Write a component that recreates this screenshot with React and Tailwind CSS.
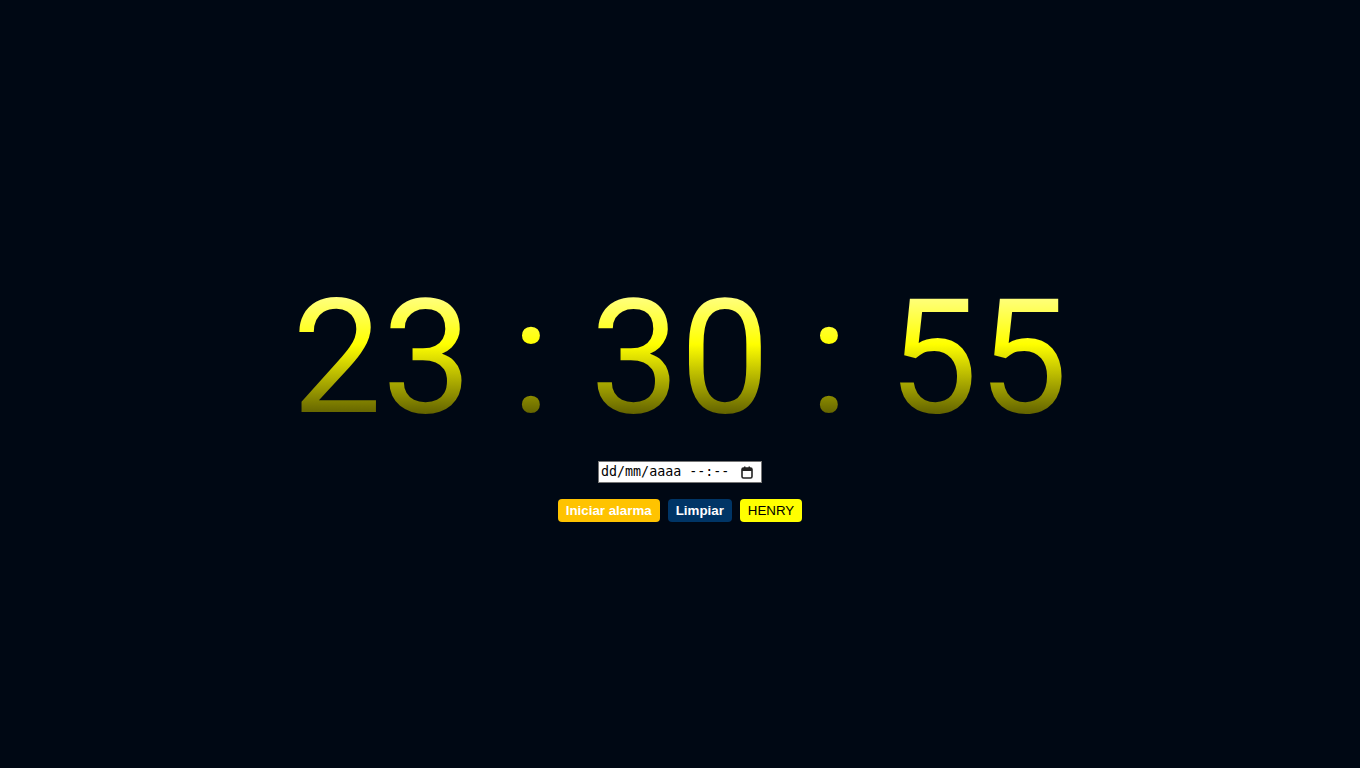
export default function App() {
  return (
    <div className="min-h-screen w-full bg-[#000814] flex flex-col items-center pt-[297px]">
      {/* Roboto is drawn at 120px and scaled up to the 160px look */}
      <h1 className="[font-family:Roboto] text-[120px] leading-none scale-[1.3333] bg-[linear-gradient(to_bottom,#ffff80_12%,#ffff00_42%,#5a5a00_88%)] bg-clip-text text-transparent">
        23 : 30 : 55
      </h1>
      <div className="mt-[44px] flex items-center w-[164px] h-[22px] bg-white border border-[#767676] pl-[2px] pr-[8px] [font-family:'DejaVu_Sans_Mono'] text-[13.33px] text-black">
        <span className="flex-1">dd/mm/aaaa --:--</span>
        <svg width="12" height="13" viewBox="0 0 12 13" className="shrink-0">
          <rect x="1" y="2" width="10" height="10" rx="1.5" fill="none" stroke="#222" strokeWidth="1.6" />
          <rect x="1" y="2" width="10" height="3" fill="#222" />
          <rect x="3" y="0.5" width="1.5" height="2.5" fill="#222" />
          <rect x="7.5" y="0.5" width="1.5" height="2.5" fill="#222" />
        </svg>
      </div>
      <div className="mt-4 flex items-center gap-2 [font-family:'Liberation_Sans'] text-[13.33px]">
        <button className="h-[23px] px-2 rounded-[4px] bg-[#ffc300] text-white font-bold">
          Iniciar alarma
        </button>
        <button className="h-[23px] px-2 rounded-[4px] bg-[#003566] text-white font-bold">
          Limpiar
        </button>
        <button className="h-[23px] px-2 rounded-[4px] bg-[#ffff00] text-black">
          HENRY
        </button>
      </div>
    </div>
  );
}
